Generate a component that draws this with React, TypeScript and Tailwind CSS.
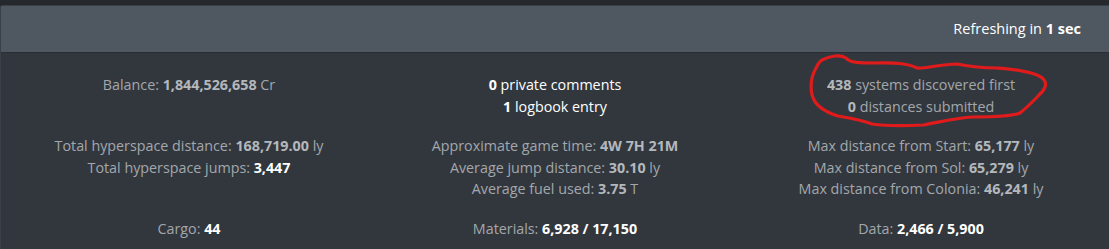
import React from "react";

const L = "text-[#a3a7ab]";
const BV = "font-bold text-[#b4b8bc]";
const W = "font-bold text-white";

export default function App() {
  return (
    <div
      className="relative w-[1109px] h-[249px] overflow-hidden bg-[#25292e] pt-[5px]"
      style={{ fontFamily: '"Open Sans", "Noto Sans", sans-serif' }}
    >
      <div className="h-full border-l border-t border-[#3a4047] rounded-tl-[3px] bg-[#32373e]">
        <div className="h-[47px] bg-[#4f5760] border-b border-[#2a2e33] flex items-center justify-end pr-[28px] text-[14.5px] text-white">
          <span>
            Refreshing in <b>1 sec</b>
          </span>
        </div>
        <div className="grid grid-cols-3 px-[5px] pt-[21px] text-[14.3px] leading-[21.5px] text-center">
          <div className={L}>
            <div className="h-[43px]">
              Balance: <b className={BV}>1,844,526,658</b> Cr
            </div>
            <div className="mt-[18px] h-[64.5px]">
              <div>
                Total hyperspace distance: <b className={BV}>168,719.00</b> ly
              </div>
              <div>
                Total hyperspace jumps: <b className={W}>3,447</b>
              </div>
            </div>
            <div className="mt-[18px]">
              Cargo: <b className={W}>44</b>
            </div>
          </div>
          <div className={L}>
            <div className="h-[43px] text-white">
              <div>
                <b>0</b> private comments
              </div>
              <div>
                <b>1</b> logbook entry
              </div>
            </div>
            <div className="mt-[18px] h-[64.5px]">
              <div>
                Approximate game time: <b className={BV}>4W 7H 21M</b>
              </div>
              <div>
                Average jump distance: <b className={BV}>30.10</b> ly
              </div>
              <div>
                Average fuel used: <b className={BV}>3.75</b> T
              </div>
            </div>
            <div className="mt-[18px]">
              Materials: <b className={W}>6,928 / 17,150</b>
            </div>
          </div>
          <div className={L}>
            <div className="h-[43px]">
              <div>
                <b className={BV}>438</b> systems discovered first
              </div>
              <div>
                <b className={BV}>0</b> distances submitted
              </div>
            </div>
            <div className="mt-[18px] h-[64.5px]">
              <div>
                Max distance from Start: <b className={BV}>65,177</b> ly
              </div>
              <div>
                Max distance from Sol: <b className={BV}>65,279</b> ly
              </div>
              <div>
                Max distance from Colonia: <b className={BV}>46,241</b> ly
              </div>
            </div>
            <div className="mt-[18px]">
              Data: <b className={W}>2,466 / 5,900</b>
            </div>
          </div>
        </div>
      </div>
      <svg
        className="absolute left-0 top-0 pointer-events-none"
        width="1109"
        height="249"
        viewBox="0 0 1109 249"
      >
        <path
          d="M822 60 C830 56 840 54 846 58 C850 63 860 63 875 63 C890 63 905 62 917 68 C925 69 940 64 957 64 C967 66 985 68 997 68 C1010 69 1025 70 1037 75 C1048 80 1047 86 1042 92 C1036 98 1030 105 1020 113 C1010 117 990 117 973 117 C955 118 940 122 923 125 C905 126 885 126 872 124 C862 120 850 118 838 116 C825 112 815 106 812 95 C810 85 812 75 816 68 C818 64 820 61 822 60 Z"
          fill="none"
          stroke="#e01b1b"
          strokeWidth="3.2"
          strokeLinejoin="round"
        />
      </svg>
    </div>
  );
}
